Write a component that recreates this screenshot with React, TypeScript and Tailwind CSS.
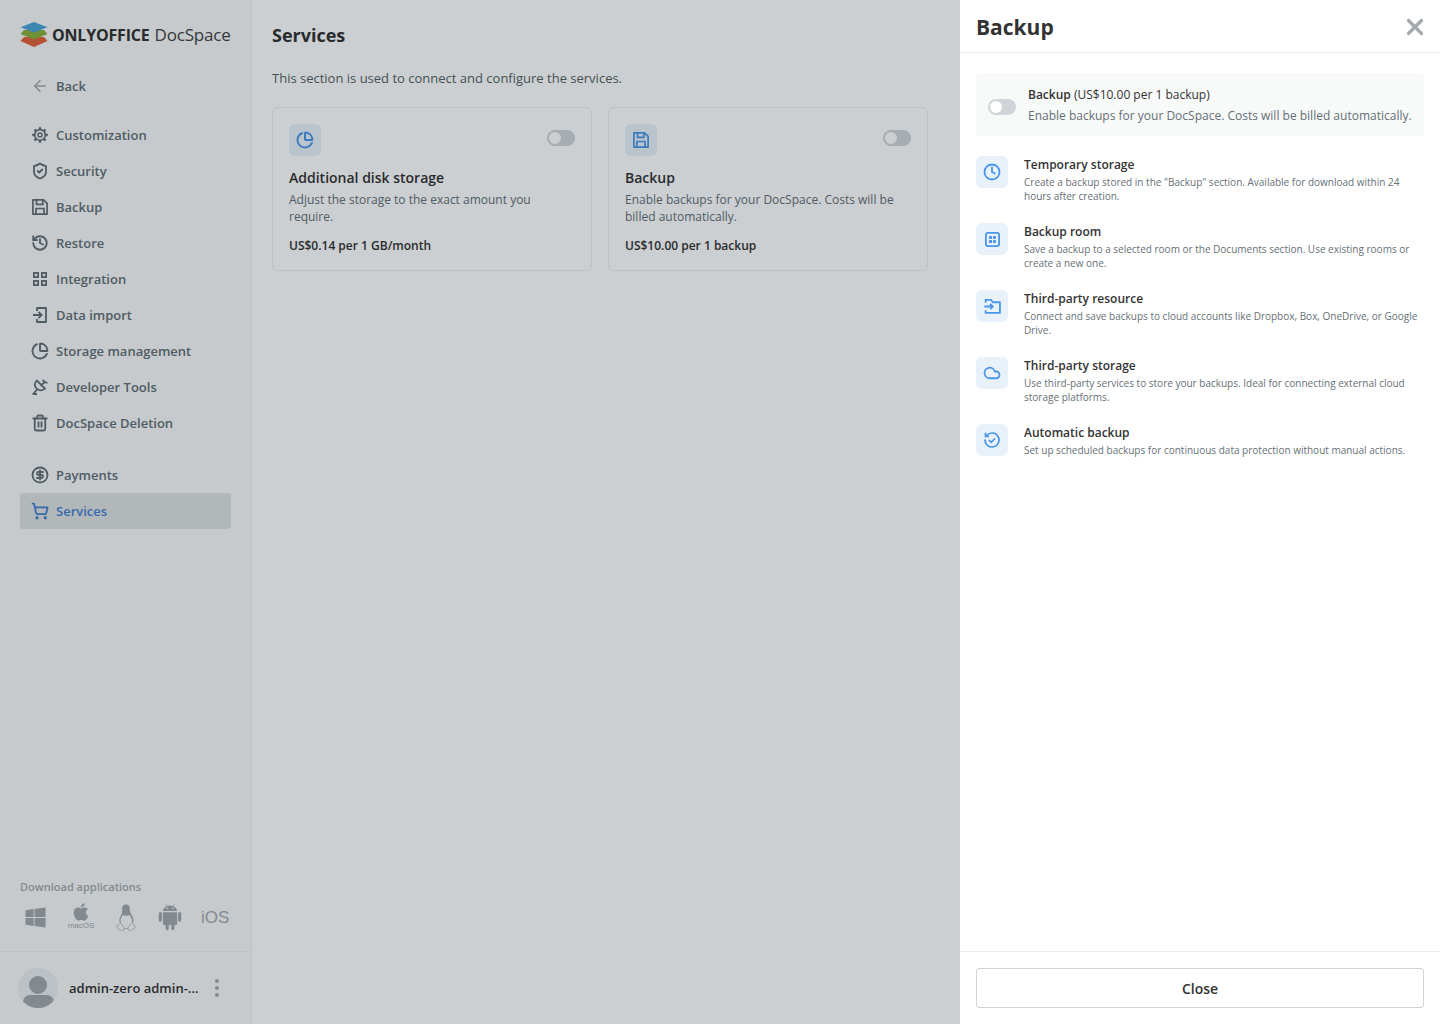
import type { ReactNode } from "react";
import {
  ArrowLeft,
  ChartPie,
  CircleDollarSign,
  Clock,
  Cloud,
  History,
  ShieldCheck,
  ShoppingCart,
  Trash2,
  X,
} from "lucide-react";
import { FaApple, FaWindows } from "react-icons/fa";
import { AiFillAndroid } from "react-icons/ai";

function GearIcon({ className }: { className?: string }) {
  return (
    <svg viewBox="0 0 16 16" fill="none" stroke="currentColor" className={className}>
      <circle cx="8" cy="8" r="5.300" strokeWidth="1.700" />
      <circle cx="8" cy="8" r="2" strokeWidth="1.600" />
      <path strokeWidth="2.400" d="M8 .2v2.400M8 13.400v2.400M.2 8h2.400M13.400 8h2.400M2.500 2.500l1.700 1.700M11.800 11.800l1.700 1.700M2.500 13.500l1.700-1.700M11.800 4.200l1.700-1.700" />
    </svg>
  );
}

function FloppyIcon({ className }: { className?: string }) {
  return (
    <svg viewBox="0 0 16 16" fill="none" stroke="currentColor" strokeWidth="1.700" className={className}>
      <path d="M.9.9h10.700L15.100 4.400V15.100H.9z" strokeLinejoin="round" />
      <path d="M4.500 1v4.300h6.300V1M4 15V9.500h8V15" />
    </svg>
  );
}

function GridIcon({ className }: { className?: string }) {
  return (
    <svg viewBox="0 0 16 16" fill="none" stroke="currentColor" strokeWidth="1.800" className={className}>
      <rect x="1.900" y="1.900" width="4.200" height="4.200" />
      <rect x="9.900" y="1.900" width="4.200" height="4.200" />
      <rect x="1.900" y="9.900" width="4.200" height="4.200" />
      <rect x="9.900" y="9.900" width="4.200" height="4.200" />
    </svg>
  );
}

function ImportIcon({ className }: { className?: string }) {
  return (
    <svg viewBox="0 0 16 16" fill="none" stroke="currentColor" strokeWidth="1.800" className={className}>
      <path d="M5 4V1h9v14H5v-3" strokeLinejoin="round" />
      <path d="M1 8h8.500M6.500 4.800 9.700 8l-3.200 3.200" />
    </svg>
  );
}

function DishIcon({ className }: { className?: string }) {
  return (
    <svg viewBox="0 0 16 16" fill="none" stroke="currentColor" strokeWidth="1.800" className={className}>
      <path d="M4.800 1.500 13 9.700c-2.500 2.300-6.300 2-8.500-.3S2.500 4 4.800 1.500z" strokeLinejoin="round" />
      <path d="M5 10.500 1.200 15M.5 15h4.500M8.500 6.500l4.500-3.500M10.500 1l2.500 2 2.500 1" />
    </svg>
  );
}

function RoomIcon({ className }: { className?: string }) {
  return (
    <svg viewBox="0 0 16 16" fill="none" className={className}>
      <rect x="1.800" y="1.800" width="12.400" height="12.400" rx="2" stroke="currentColor" strokeWidth="1.700" />
      <path fill="currentColor" d="M4.800 4.800h2.700v2.700H4.800zM8.500 4.800h2.700v2.700H8.500zM4.800 8.500h2.700v2.700H4.800zM8.500 8.500h2.700v2.700H8.500z" />
    </svg>
  );
}

function ResourceIcon({ className }: { className?: string }) {
  return (
    <svg viewBox="0 0 16 16" fill="none" stroke="currentColor" strokeWidth="1.700" className={className}>
      <path d="M1.500 4.500V1.800h5.200l1.600 2.200h6.700v10H1.500v-2.500" strokeLinejoin="round" />
      <path d="M.3 8h8M5.800 5.500 8.300 8l-2.500 2.500" />
    </svg>
  );
}

function AutoBackupIcon({ className }: { className?: string }) {
  return (
    <svg viewBox="0 0 16 16" fill="none" stroke="currentColor" strokeWidth="1.700" className={className}>
      <path d="M2.800 3.300A7 7 0 1 1 1 8" strokeLinecap="round" />
      <path d="M1.500 .8v3.500H5" />
      <path d="m5 8.200 2.200 2.200L11 6.500" />
    </svg>
  );
}

function TuxIcon({ className }: { className?: string }) {
  return (
    <svg viewBox="0 0 22 28" className={className}>
      <path
        fill="currentColor"
        d="M11 .5c3 0 4.200 2.300 4 5.500-.1 2.500 1 3.800 2.200 5.800 1.700 2.900 2 5.500 1 8h-1c.6-3-.6-6-2.700-8.300-1.800 1-4.800 1-6.800 0-2 2.600-3 5.500-1.900 8.300H4.700c-1.300-3-.5-5.600 1-8C7 9.800 7.200 8.500 7 6 6.800 2.800 8 .5 11 .5z"
      />
      <path
        fill="none"
        stroke="currentColor"
        strokeWidth="0.700"
        d="M6 20.500c-.8-.6-1.700-.3-2.100.6-.5.9-1.900.6-2.300 1.400-.3.8.5 1.800.3 2.700.8 1 3 1.400 4.600 2.300 1.200.5 2.500-.3 2.500-1.600 0-1.800-1.700-3.700-3-5.400zM16 20.500c.8-.6 1.700-.3 2.100.6.5.9 1.900.6 2.300 1.400.3.800-.5 1.800-.3 2.700-.8 1-3 1.400-4.600 2.300-1.200.5-2.500-.3-2.500-1.600 0-1.800 1.700-3.700 3-5.400zM8.800 25.200c1.400.5 3 .5 4.400 0"
      />
    </svg>
  );
}

const topNav: { label: string; icon: ReactNode }[] = [
  { label: "Customization", icon: <GearIcon className="size-4" /> },
  { label: "Security", icon: <ShieldCheck className="size-[18px] shrink-0" strokeWidth={2.4} /> },
  { label: "Backup", icon: <FloppyIcon className="size-4" /> },
  { label: "Restore", icon: <History className="size-[18px] shrink-0" strokeWidth={2.5} /> },
  { label: "Integration", icon: <GridIcon className="size-4" /> },
  { label: "Data import", icon: <ImportIcon className="size-4" /> },
  { label: "Storage management", icon: <ChartPie className="size-[18px] shrink-0" strokeWidth={2.5} /> },
  { label: "Developer Tools", icon: <DishIcon className="size-4" /> },
  { label: "DocSpace Deletion", icon: <Trash2 className="size-[18px] shrink-0" strokeWidth={2.4} /> },
];

const backupOptions: { title: string; lines: string; icon: ReactNode }[] = [
  {
    title: "Temporary storage",
    lines: 'Create a backup stored in the "Backup" section. Available for download within 24 hours after creation.',
    icon: <Clock className="size-[18px]" strokeWidth={2.4} />,
  },
  {
    title: "Backup room",
    lines: "Save a backup to a selected room or the Documents section. Use existing rooms or create a new one.",
    icon: <RoomIcon className="size-[17px]" />,
  },
  {
    title: "Third-party resource",
    lines: "Connect and save backups to cloud accounts like Dropbox, Box, OneDrive, or Google Drive.",
    icon: <ResourceIcon className="size-[17px]" />,
  },
  {
    title: "Third-party storage",
    lines: "Use third-party services to store your backups. Ideal for connecting external cloud storage platforms.",
    icon: <Cloud className="size-[18px]" strokeWidth={2.4} />,
  },
  {
    title: "Automatic backup",
    lines: "Set up scheduled backups for continuous data protection without manual actions.",
    icon: <AutoBackupIcon className="size-4" />,
  },
];

function NavRow({ icon, label, active }: { icon: ReactNode; label: string; active?: boolean }) {
  return (
    <div
      className={
        active
          ? "flex h-9 items-center rounded-[3px] bg-[#dfe2e3] pl-3 text-[#4781d1]"
          : "flex h-9 items-center pl-3 text-[#657077]"
      }
    >
      <span className="flex w-4 items-center justify-center">{icon}</span>
      <span className="ml-2 pt-0.5 text-[13px] font-semibold">{label}</span>
    </div>
  );
}

function Toggle() {
  return (
    <div className="flex h-4 w-7 items-center rounded-full bg-[#d0d5da] pl-0.5">
      <div className="size-3 rounded-full bg-white" />
    </div>
  );
}

function ServiceCard({
  icon,
  title,
  text,
  price,
}: {
  icon: ReactNode;
  title: string;
  text: string;
  price: string;
}) {
  return (
    <div className="h-[164px] w-80 rounded-md border border-[#eceef1] p-4">
      <div className="flex items-start justify-between">
        <div className="flex size-8 items-center justify-center rounded-md bg-[#e9f2fb] text-[#4b96e8]">{icon}</div>
        <div className="mt-1.5">
          <Toggle />
        </div>
      </div>
      <div className="mt-3 text-sm leading-5 font-semibold text-[#333333]">{title}</div>
      <div className="mt-[3px] text-xs leading-[17px] text-[#657077]">{text}</div>
      <div className="mt-[13px] text-xs leading-4 font-semibold text-[#333333]">{price}</div>
    </div>
  );
}

export default function App() {
  return (
    <div className="relative flex h-[1024px] w-[1440px] overflow-hidden bg-white font-['Open_Sans',sans-serif]">
      <aside className="flex w-[252px] shrink-0 flex-col border-r border-[#eceef1] bg-[#f8f9f9]">
        <div className="flex h-[68px] items-center pl-5">
          <svg viewBox="0 0 28 25" className="h-[25px] w-7">
            <path fill="#e2623a" d="M14 25 .5 19 4 15h20l3.500 4z" />
            <path fill="#8cb13f" d="M14 17.500 .5 12 4 8h20l3.500 4z" />
            <path fill="#4ba5d8" d="M14 10.500 .5 5.300 14 0l13.500 5.300z" />
          </svg>
          <span className="ml-1 pt-0.5 text-base font-bold tracking-[-0.2px] text-[#333333]">ONLYOFFICE</span>
          <span className="ml-[5px] pt-0.5 text-[17px] tracking-[-0.2px] text-[#444444]">DocSpace</span>
        </div>

        <nav className="mr-5 ml-5 flex flex-col">
          <div className="flex h-9 items-center pl-3 text-[#a3a9ae]">
            <ArrowLeft className="size-[18px] shrink-0 -translate-x-px" strokeWidth={2} />
            <span className="ml-1.5 pt-0.5 text-[13px] font-semibold text-[#657077]">Back</span>
          </div>
          <div className="mt-[13px] flex flex-col">
            {topNav.map((item) => (
              <NavRow key={item.label} icon={item.icon} label={item.label} />
            ))}
          </div>
          <div className="mt-4 flex flex-col">
            <NavRow label="Payments" icon={<CircleDollarSign className="size-[18px] shrink-0" strokeWidth={2.4} />} />
            <NavRow active label="Services" icon={<ShoppingCart className="size-[18px] shrink-0" strokeWidth={2.4} />} />
          </div>
        </nav>

        <div className="mt-auto px-5 pb-5">
          <div className="text-[11px] leading-[15px] font-semibold text-[#a3a9ae]">Download applications</div>
          <div className="mt-[9px] flex h-7 items-center pl-1 text-[#a3a9ae]">
            <FaWindows className="size-[23px] shrink-0" />
            <div className="ml-[21px] flex w-[26px] -translate-y-px flex-col items-center leading-none">
              <FaApple className="size-[20px]" />
              <span className="font-['Liberation_Sans',sans-serif] text-[8px] leading-[8px]">macOS</span>
            </div>
            <TuxIcon className="ml-[21px] h-[27px] w-[22px] shrink-0" />
            <AiFillAndroid className="ml-[18px] size-[30px] shrink-0" />
            <span className="ml-4 font-['Liberation_Sans',sans-serif] text-[17px] leading-none">iOS</span>
          </div>
        </div>

        <div className="flex h-[73px] items-center border-t border-[#eceef1] pl-[18px]">
          <div className="relative flex size-10 items-center justify-center overflow-hidden rounded-full bg-[#eceef1]">
            <div className="absolute top-[8px] size-[18px] rounded-full bg-[#a3a9ae]" />
            <div className="absolute top-[27px] h-[13px] w-[31px] rounded-t-[16px] rounded-b-[14px] bg-[#a3a9ae]" />
          </div>
          <span className="ml-[11px] w-[132px] pt-0.5 text-[13px] font-semibold whitespace-nowrap text-[#333333]">
            admin-zero admin-...
          </span>
          <div className="ml-[14px] flex flex-col gap-[3px]">
            <div className="size-1 rounded-full bg-[#a3a9ae]" />
            <div className="size-1 rounded-full bg-[#a3a9ae]" />
            <div className="size-1 rounded-full bg-[#a3a9ae]" />
          </div>
        </div>
      </aside>

      <main className="flex-1 px-5">
        <h1 className="mt-[22px] text-lg leading-[26px] font-bold text-[#333333]">Services</h1>
        <p className="mt-[21px] text-[13px] leading-[18px] text-[#555f65]">
          This section is used to connect and configure the services.
        </p>
        <div className="mt-5 flex gap-4">
          <ServiceCard
            title="Additional disk storage"
            text="Adjust the storage to the exact amount you require."
            price="US$0.14 per 1 GB/month"
            icon={<ChartPie className="size-[18px]" strokeWidth={2.6} />}
          />
          <ServiceCard
            title="Backup"
            text="Enable backups for your DocSpace. Costs will be billed automatically."
            price="US$10.00 per 1 backup"
            icon={<FloppyIcon className="size-4" />}
          />
        </div>
      </main>

      {/* backdrop of the side panel */}
      <div className="absolute inset-0 bg-[rgba(0,15,25,0.2)]" />

      <section className="absolute inset-y-0 right-0 flex w-[480px] flex-col bg-white">
        <header className="flex h-[53px] shrink-0 items-center justify-between border-b border-[#eceef1] pr-3 pl-4">
          <h2 className="mt-1 text-[21px] font-bold text-[#333333]">Backup</h2>
          <X className="mt-0.5 size-[26px] text-[#a3a9ae]" strokeWidth={3} />
        </header>

        <div className="flex-1 px-4 pt-5">
          <div className="flex h-[63px] items-center rounded-[3px] bg-[#f8f9f9] pl-3">
            <div className="mt-1">
              <Toggle />
            </div>
            <div className="mt-0.5 ml-3">
              <div className="text-xs leading-5 text-[#333333]">
                <span className="font-semibold">Backup</span> (US$10.00 per 1 backup)
              </div>
              <div className="mt-px text-xs leading-5 text-[#657077]">
                Enable backups for your DocSpace. Costs will be billed automatically.
              </div>
            </div>
          </div>

          <div className="mt-5 flex flex-col gap-[19px]">
            {backupOptions.map((option) => (
              <div key={option.title} className="flex min-h-12 gap-4">
                <div className="flex size-8 shrink-0 items-center justify-center rounded-md bg-[#e9f2fb] text-[#4b96e8]">
                  {option.icon}
                </div>
                <div className="-mt-px">
                  <div className="text-xs leading-[20px] font-semibold text-[#333333]">{option.title}</div>
                  <div className="text-[10px] leading-[14px] text-[#657077]">{option.lines}</div>
                </div>
              </div>
            ))}
          </div>
        </div>

        <footer className="flex h-[73px] shrink-0 items-center border-t border-[#eceef1] px-4">
          <button className="h-10 w-full rounded-[3px] border border-[#d0d5da] bg-white pt-0.5 text-sm font-semibold text-[#333333]">
            Close
          </button>
        </footer>
      </section>
    </div>
  );
}
